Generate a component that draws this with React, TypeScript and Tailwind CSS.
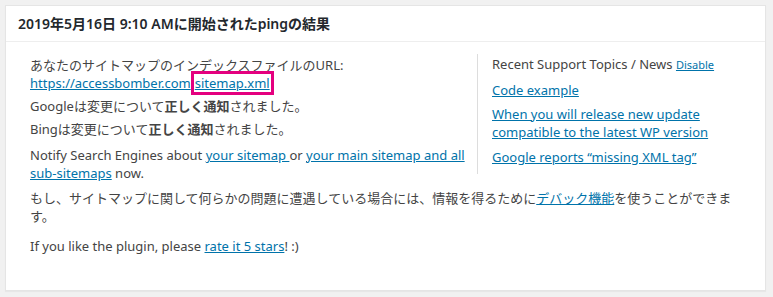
const link = 'text-[#0073aa] underline'

const News = [
  'Code example',
  'When you will release new update compatible to the latest WP version',
  'Google reports “missing XML tag”'
]

export default function App() {
  return (
    <div
      className="w-[773px] h-[297px] bg-[#f1f1f1] pl-[5px] pt-[5px] text-[13px] leading-[18px] text-[#444]"
      style={{ fontFamily: '"Noto Sans", "Noto Sans CJK JP", sans-serif' }}
    >
      <div className="w-[761px] h-[286px] bg-white border border-[#e5e5e5] shadow-[0_1px_1px_rgba(0,0,0,0.04)]">
        <h2 className="px-3 py-2 border-b border-[#eee] text-[14px] leading-[19px] font-semibold text-[#23282d]">
          2019年5月16日 9:10 AMに開始されたpingの結果
        </h2>

        <div className="px-6 pt-3">
          <div className="flex items-start">
            <div className="flex-1 pr-3 pt-[2px]">
              <p>
                あなたのサイトマップのインデックスファイルのURL:
                <br />
                <a className={link}>https://accessbomber.com</a>
                <span className="border-[3px] border-[#e4007f] px-[1px]">
                  <a className={link}>sitemap.xml</a>
                </span>
              </p>
              <p className="mt-[5px]">
                Googleは変更について<b>正しく通知</b>されました。
              </p>
              <p className="mt-[5px]">
                Bingは変更について<b>正しく通知</b>されました。
              </p>
              <p className="mt-[8px]">
                Notify Search Engines about <a className={link}>your sitemap </a> or{' '}
                <a className={link}>your main sitemap and all sub-sitemaps</a> now.
              </p>
            </div>

            <div className="w-[264px] border-l border-[#ddd] pl-[14px] pt-[1px] pb-[8px]">
              <p>
                Recent Support Topics / News{' '}
                <a className={`${link} text-[11px]`}>Disable</a>
              </p>
              {News.map((n, i) => (
                <p key={n} className={i === 1 ? 'mt-[6px]' : 'mt-[7px]'}>
                  <a className={link}>{n}</a>
                </p>
              ))}
            </div>
          </div>

          <p className="mt-[7px]">
            もし、サイトマップに関して何らかの問題に遭遇している場合には、情報を得るために
            <a className={link}>デバック機能</a>を使うことができます。
          </p>
          <p className="mt-[12px]">
            If you like the plugin, please <a className={link}>rate it 5 stars</a>! :)
          </p>
        </div>
      </div>
    </div>
  )
}
